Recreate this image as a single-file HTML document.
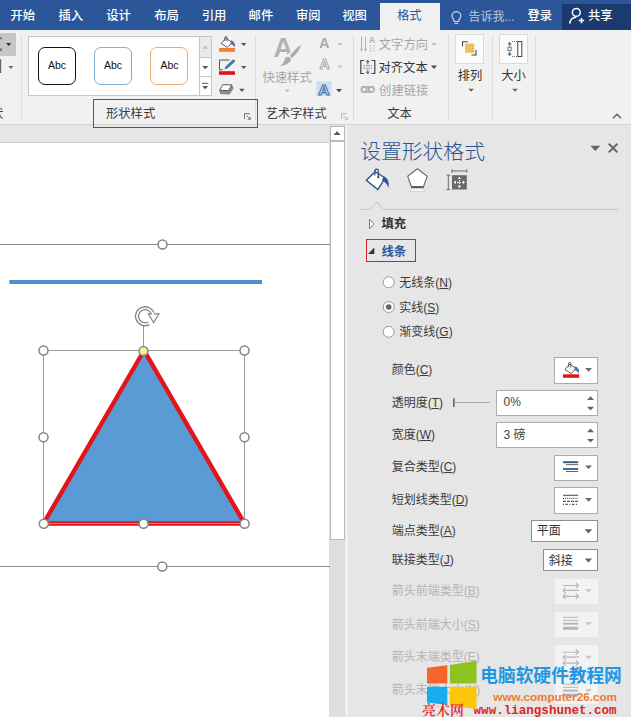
<!DOCTYPE html>
<html lang="zh-CN"><head><meta charset="utf-8"><title>设置形状格式 - 线条</title>
<style>
html,body{margin:0;padding:0}
body{width:631px;height:717px;position:relative;overflow:hidden;background:#e6e6e6;font-family:"Liberation Sans",sans-serif;font-size:12px;color:#444}
.b{position:absolute;box-sizing:border-box}
.ov{position:absolute;left:0;top:0;pointer-events:none;overflow:hidden}
.x{position:absolute;white-space:nowrap;line-height:1;margin-top:.055em;pointer-events:none;font-family:"Liberation Sans","Noto Sans CJK SC",sans-serif}
.a{position:absolute;white-space:nowrap;line-height:1}
</style></head>
<body>
<nav id="tabs">
<div class="b" style="left:0px;top:0px;width:631px;height:30px;background:#2b579a"></div>
<div class="b" style="left:379.8px;top:3px;width:59.9px;height:28px;background:#f1f1f1"></div>
<div class="b" style="left:562px;top:3.5px;width:69px;height:26px;background:#1b3b70"></div>
<svg class="ov" width="631" height="717" viewBox="0 0 631 717">
<g fill="none" stroke="#c9d5ea" stroke-width="1.2"><path d="M454 19.800c-1.400-1.100-2-2.400-2-3.800a4.400 4.400 0 0 1 8.800 0c0 1.400-.6 2.700-2 3.800v1.700h-4.800z"/><path d="M454.500 23.500h3.800"/></g>
<g fill="none" stroke="#fff" stroke-width="1.5"><circle cx="576.300" cy="12.400" r="3.900"/><path d="M569.800 23.600c.3-3.800 2.700-6.200 6.400-6.400"/><path d="M578.800 20.600h5.400M581.500 17.900v5.400"/></g>
</svg>
<span class="x" style="left:10.4px;top:9.5px;font-size:12.3px;color:#fff;font-weight:500">开始</span>
<span class="x" style="left:58.5px;top:9.5px;font-size:12.3px;color:#fff;font-weight:500">插入</span>
<span class="x" style="left:106.3px;top:9.5px;font-size:12.3px;color:#fff;font-weight:500">设计</span>
<span class="x" style="left:154.2px;top:9.5px;font-size:12.3px;color:#fff;font-weight:500">布局</span>
<span class="x" style="left:201.8px;top:9.5px;font-size:12.3px;color:#fff;font-weight:500">引用</span>
<span class="x" style="left:248.6px;top:9.5px;font-size:12.3px;color:#fff;font-weight:500">邮件</span>
<span class="x" style="left:296px;top:9.5px;font-size:12.3px;color:#fff;font-weight:500">审阅</span>
<span class="x" style="left:342.3px;top:9.5px;font-size:12.3px;color:#fff;font-weight:500">视图</span>
<span class="x" style="left:396.9px;top:9.5px;font-size:12.3px;color:#2b579a">格式</span>
<span class="x" style="left:468.5px;top:10.3px;font-size:12px;color:#b9c8e2">告诉我...</span>
<span class="x" style="left:527.5px;top:9.5px;font-size:12.3px;color:#fff;font-weight:500">登录</span>
<span class="x" style="left:588px;top:9.5px;font-size:12.3px;color:#fff;font-weight:500">共享</span>
</nav>
<header id="ribbon">
<div class="b" style="left:0px;top:30px;width:631px;height:94.5px;background:#f1f1f1;border-bottom:1px solid #d2d2d2"></div>
<div class="b" style="left:21.2px;top:35px;width:1px;height:85px;background:#dcdcdc"></div>
<div class="b" style="left:255px;top:35px;width:1px;height:85px;background:#dcdcdc"></div>
<div class="b" style="left:352.5px;top:35px;width:1px;height:85px;background:#dcdcdc"></div>
<div class="b" style="left:447.5px;top:35px;width:1px;height:85px;background:#dcdcdc"></div>
<div class="b" style="left:492px;top:35px;width:1px;height:85px;background:#dcdcdc"></div>
<div class="b" style="left:535px;top:35px;width:1px;height:85px;background:#dcdcdc"></div>
<div class="b" style="left:28px;top:36px;width:184px;height:59.5px;background:#fff;border:1px solid #c6c6c6"></div>
<div class="b" style="left:38px;top:47px;width:38px;height:38px;border:1.5px solid #111;border-radius:7px;background:#fff"></div>
<span class="a" style="left:48px;top:59.9px;font-size:10.5px;color:#111">Abc</span>
<div class="b" style="left:94px;top:47px;width:38px;height:38px;border:1.5px solid #7fb0d6;border-radius:7px;background:#fff"></div>
<span class="a" style="left:104px;top:59.9px;font-size:10.5px;color:#111">Abc</span>
<div class="b" style="left:150.4px;top:47px;width:38px;height:38px;border:1.5px solid #ecab6c;border-radius:7px;background:#fff"></div>
<span class="a" style="left:160.4px;top:59.9px;font-size:10.5px;color:#111">Abc</span>
<div class="b" style="left:198.5px;top:36px;width:13.5px;height:59.5px;border-left:1px solid #c6c6c6;border-right:1px solid #c6c6c6;border-top:1px solid #c6c6c6;border-bottom:1px solid #c6c6c6;background:#fff"></div>
<div class="b" style="left:199.5px;top:37px;width:11.5px;height:20.5px;background:#e9e9e9;border-bottom:1px solid #c6c6c6"></div>
<div class="b" style="left:199.5px;top:57.5px;width:11.5px;height:19px;border-bottom:1px solid #c6c6c6"></div>
<div class="b" style="left:93px;top:99px;width:165px;height:28.5px;border:1.3px solid #cf222b"></div>
<div class="b" style="left:454.5px;top:34px;width:29.5px;height:29.5px;background:#fbfbfb;border:1px solid #dadada"></div>
<div class="b" style="left:498.5px;top:34px;width:29.5px;height:29.5px;background:#fbfbfb;border:1px solid #dadada"></div>
<div class="b" style="left:0px;top:33px;width:16px;height:23px;background:#c6c6c6"></div>
<span class="a" style="left:273.500px;top:34.800px;font-size:27px;font-weight:bold;color:#b2b2b2">A</span>
<span class="a" style="left:319.300px;top:36.200px;font-size:14px;font-weight:bold;color:#a8a8a8">A</span>
<svg class="ov" width="631" height="717" viewBox="0 0 631 717">
<path d="M202.2 48.800l3-3.200 3 3.200z" fill="#c0c0c0"/>
<path d="M202.2 66l3 3.200 3-3.200z" fill="#555"/>
<path d="M202 83.300h6.400" stroke="#555" stroke-width="1" fill="none"/><path d="M202.200 86l3 3.200 3-3.200z" fill="#555"/>
<g fill="none" stroke="#777" stroke-width="1"><path d="M244.500 119v-5.500h5.500"/><path d="M246.400 115.400l3.600 3.600"/></g><path d="M250.800 119.800v-3.400l-3.400 3.400z" fill="#777"/>
<g fill="none" stroke="#bcbcbc" stroke-width="1"><path d="M341.500 119v-5.500h5.500"/><path d="M343.400 115.400l3.600 3.600"/></g><path d="M347.800 119.800v-3.400l-3.400 3.400z" fill="#bcbcbc"/>
<path d="M241 43h5.400l-2.700 3.100z" fill="#555"/>
<path d="M241 66h5.400l-2.700 3.100z" fill="#555"/>
<path d="M239.200 88.800h5.400l-2.700 3.100z" fill="#555"/>
<path d="M284.500 89.500h5.600l-2.800 3z" fill="#c4c4c4"/>
<path d="M431.300 43h5.600l-2.800 3z" fill="#bdbdbd"/>
<path d="M431 65.600h6l-3 3.300z" fill="#444"/>
<path d="M337.300 43h5.600l-2.800 3z" fill="#c4c4c4"/>
<path d="M337.300 65.600h5.600l-2.800 3z" fill="#c4c4c4"/>
<path d="M336 89h6l-3 3.300z" fill="#444"/>
<path d="M468.300 88.800h5.600l-2.800 3z" fill="#666"/>
<path d="M512.300 88.800h5.600l-2.800 3z" fill="#666"/>
<path d="M613 118.300l4-4 4 4" fill="none" stroke="#666" stroke-width="1.600"/>
<path d="M0 37.300h2v2h-2zM0 48.500h2v2.500h-2z" fill="#4f7fb0"/>
<path d="M6 43h5.400l-2.700 3.100z" fill="#333"/><path d="M8.300 65.900h5l-2.500 3.100z" fill="#666"/><path d="M0 59.300h1.200v13.700h-1.200z" fill="#666"/>
<g transform="translate(221.3,36.7) scale(1)"><path d="M0 6.700L4.600 1.500L10.800 5.700L6.100 10.800Z" fill="#fff" stroke="#555" stroke-width="1" stroke-linejoin="round"/><path d="M3.500 4.300V0.900a1.100 1.100 0 0 1 2.200 0V4.700" fill="none" stroke="#555" stroke-width="1"/><path d="M10 3.600c3 1 4.300 3.600 3.600 7.200c-1.200-2-2.600-3-4.600-3.800z" fill="#5a7a9a"/></g>
<path d="M219 48h16v3.800h-16z" fill="#ee8232"/>
<path d="M229.500 60H219.500V69.800H222.800" fill="none" stroke="#555" stroke-width="1"/>
<path d="M224.500 69.200l1-2.800l7-6.400a1.400 1.400 0 0 1 2 2l-7.200 6.400z" fill="#4a7396"/>
<path d="M219 71.200h16v3.600h-16z" fill="#dc1418"/>
<path d="M219.600 90.300L228.600 90.600L231.800 84.900L233.300 86.600V89L229.600 94.600L220.600 94.300L219.600 92.500Z" fill="#8c8c8c"/><path d="M222.800 84.600L231.800 84.900L228.600 90.600L219.600 90.300Z" fill="#fff" stroke="#555" stroke-width="1" stroke-linejoin="round"/>
<path d="M301.500 44.500L289 57.500" stroke="#f1f1f1" stroke-width="6" fill="none"/>
<path d="M301 44.800c-.5 3.500-3.500 8-9 13.200l-2.200-2.200c4.700-5.700 8-9 11.200-11z" fill="#ababab"/><path d="M288.800 56.800l2.300 2.300c-1 3.800-4.800 6.600-11.800 7.200c3.300-1.600 4.400-3.500 5.200-6.600c.6-2.200 2.500-3.300 4.300-2.900z" fill="#ababab"/>
<text x="319.600" y="69.200" font-family="Liberation Sans,sans-serif" font-size="14" font-weight="bold" fill="#fff" stroke="#adadad" stroke-width="1">A</text>
<rect x="316.500" y="81.500" width="15" height="14.500" fill="#cbdcf1"/>
<text x="318.300" y="94.500" font-family="Liberation Sans,sans-serif" font-size="15.500" font-weight="bold" fill="#fff" stroke="#4472a8" stroke-width="1.100">A</text>
<g stroke="#b4b4b4" fill="none" stroke-width="1"><path d="M361.500 36.500V50M365.500 36.500V50"/><path d="M370.500 45V51.500M374 45V51.500" stroke-dasharray="1.500 1"/></g><path d="M359.800 48.800h3.400l-1.700 2.700zM363.800 48.800h3.400l-1.700 2.700z" fill="#b4b4b4"/><text x="369" y="43.300" font-family="Liberation Sans,sans-serif" font-size="8.500" font-weight="bold" fill="#b0b0b0">A</text>
<g fill="none" stroke="#444" stroke-width="1.200"><path d="M364 60.500H360.800V73.500H364M371.500 60.500H374.800V73.500H371.500"/></g><g stroke="#4a7396" stroke-width="1.100" fill="none"><path d="M367.800 60.500V64.500M367.800 69.500V73.500"/><path d="M363.500 65.700H372M363.500 68.300H372" stroke="#777" stroke-dasharray="1.500 1"/></g><path d="M365.600 62.300l2.200-2.600l2.200 2.600zM365.600 71.700l2.200 2.600l2.200-2.600z" fill="#4a7396"/>
<g fill="none" stroke="#b2b2b2" stroke-width="1.900"><rect x="361.400" y="87" width="7.800" height="5" rx="2.500"/><rect x="366.300" y="87" width="7.800" height="5" rx="2.500"/></g>
<rect x="465" y="43.500" width="9.300" height="9.300" fill="#e9c25d"/><path d="M462.500 46.500V41.800H467.800M471.500 55H476V50" fill="none" stroke="#444" stroke-width="1.100"/>
<rect x="517.800" y="41.500" width="4" height="15" fill="#fff" stroke="#444" stroke-width="1"/><rect x="508" y="47.300" width="3.200" height="3.200" fill="#fff" stroke="#777" stroke-width="1"/><path d="M507.300 44.500l2.300-2.800l2.300 2.800zM507.300 53.500l2.300 2.800l2.300-2.800z" fill="#3a78b5"/><path d="M509.600 44V46.500M509.600 51.500V54" stroke="#3a78b5" stroke-width="1.200" fill="none"/><path d="M512 41.500H517M512 56.500H517" stroke="#777" stroke-width="1" stroke-dasharray="1 1" fill="none"/>
</svg>
<span class="x" style="left:106px;top:107.2px;font-size:12.3px;color:#3c3c3c">形状样式</span>
<span class="x" style="left:266px;top:107.4px;font-size:12.1px;color:#3c3c3c">艺术字样式</span>
<span class="x" style="left:387.3px;top:107.5px;font-size:12.3px;color:#3c3c3c">文本</span>
<span class="x" style="left:-9.1px;top:107.2px;font-size:12.3px;color:#3c3c3c">状</span>
<span class="x" style="left:262.5px;top:71.1px;font-size:12.3px;color:#a6a6a6">快速样式</span>
<span class="x" style="left:378.8px;top:38.5px;font-size:12.3px;color:#a6a6a6">文字方向</span>
<span class="x" style="left:378.5px;top:61px;font-size:12.3px;color:#333">对齐文本</span>
<span class="x" style="left:379.1px;top:84.1px;font-size:12.3px;color:#a6a6a6">创建链接</span>
<span class="x" style="left:457.8px;top:68.9px;font-size:12.3px;color:#333">排列</span>
<span class="x" style="left:501.3px;top:68.9px;font-size:12.3px;color:#333">大小</span>
</header>
<main id="doc">
<div class="b" style="left:0px;top:142px;width:330px;height:575px;background:#fff;border-top:1px solid #c9c9c9"></div>
<div class="b" style="left:329px;top:125px;width:16px;height:592px;background:#dedede"></div>
<div class="b" style="left:330px;top:126px;width:14.7px;height:14.7px;background:#fff;border:1px solid #bababa"></div>
<div class="b" style="left:330px;top:141.2px;width:14.7px;height:399.3px;background:#fff;border:1px solid #bababa"></div>
<div class="b" style="left:345px;top:125px;width:2.5px;height:592px;background:#efefef"></div>
<svg class="ov" width="631" height="717" viewBox="0 0 631 717">
<path d="M333.500 135l3.600-3.800 3.600 3.800z" fill="#555"/>
<path d="M0 244.500H330M0 566.500H330" stroke="#8c8c8c" stroke-width="1" fill="none"/>
<path d="M9.300 282H262" stroke="#4f90cd" stroke-width="4" fill="none"/>
<path d="M144 350.500L43.500 523.500H244.500Z" fill="#5b9bd5" stroke="#e3141c" stroke-width="4.400" stroke-linejoin="miter"/>
<path d="M43.500 350.500H244.500V523.500H43.500Z M143.500 326V346" fill="none" stroke="#9a9a9a" stroke-width="1"/>
<circle cx="162.500" cy="244.500" r="4.500" fill="#fff" stroke="#858585" stroke-width="1.500"/>
<circle cx="162.300" cy="566.500" r="4.500" fill="#fff" stroke="#858585" stroke-width="1.500"/>
<circle cx="43.500" cy="350.500" r="4.500" fill="#fff" stroke="#858585" stroke-width="1.500"/>
<circle cx="244.500" cy="350.500" r="4.500" fill="#fff" stroke="#858585" stroke-width="1.500"/>
<circle cx="43.500" cy="437.300" r="4.500" fill="#fff" stroke="#858585" stroke-width="1.500"/>
<circle cx="244.500" cy="437.300" r="4.500" fill="#fff" stroke="#858585" stroke-width="1.500"/>
<circle cx="43.800" cy="523.700" r="4.500" fill="#fff" stroke="#858585" stroke-width="1.500"/>
<circle cx="143.600" cy="523.700" r="4.500" fill="#fff" stroke="#858585" stroke-width="1.500"/>
<circle cx="244.600" cy="523.700" r="4.500" fill="#fff" stroke="#858585" stroke-width="1.500"/>
<circle cx="143.500" cy="351" r="4.500" fill="#ffe9a0" stroke="#858585" stroke-width="1.500"/>
<g fill="none" stroke-linecap="butt"><path d="M148.800 323.300A8 8 0 1 1 153 315.500" stroke="#888" stroke-width="4.200"/><path d="M148.800 323.300A8 8 0 1 1 153 315.500" stroke="#fff" stroke-width="1.600"/><path d="M148.300 313.800H159L153.600 322.600Z" fill="#fff" stroke="#888" stroke-width="1.200" stroke-linejoin="miter"/><path d="M152 312.500v2.200h2.100v-2.200z" fill="#fff" stroke="none"/></g>
</svg>
</main>
<aside id="pane">
<div class="b" style="left:347.5px;top:125px;width:283.5px;height:592px;background:#e6e6e6"></div>
<div class="b" style="left:366px;top:238.500px;width:49.5px;height:23px;border:1.3px solid #cf222b"></div>
<div class="b" style="left:554.2px;top:357.2px;width:43.6px;height:26.4px;background:#fff;border:1px solid #ababab"></div>
<div class="b" style="left:554.2px;top:454.6px;width:43.6px;height:26.4px;background:#fff;border:1px solid #ababab"></div>
<div class="b" style="left:554.2px;top:487.2px;width:43.6px;height:26.4px;background:#fff;border:1px solid #ababab"></div>
<div class="b" style="left:554.5px;top:578.6px;width:43px;height:25.5px;background:#f3f3f3"></div>
<div class="b" style="left:554.5px;top:611.6px;width:43px;height:25.5px;background:#f3f3f3"></div>
<div class="b" style="left:554.5px;top:645.3px;width:43px;height:25.5px;background:#f3f3f3"></div>
<div class="b" style="left:554.5px;top:678.5px;width:43px;height:25.5px;background:#f3f3f3"></div>
<div class="b" style="left:495.8px;top:390.2px;width:102px;height:25.4px;background:#fff;border:1px solid #ababab"></div>
<div class="b" style="left:495.8px;top:422.4px;width:102px;height:25.4px;background:#fff;border:1px solid #ababab"></div>
<span class="a" style="left:503.500px;top:396.300px;font-size:12px;color:#444">0%</span>
<span class="a" style="left:503.500px;top:428.500px;font-size:12px;color:#444">3</span>
<div class="b" style="left:531.3px;top:520.3px;width:66.5px;height:22px;background:#fff;border:1px solid #8f8f8f"></div>
<div class="b" style="left:543.3px;top:549.4px;width:54.5px;height:22px;background:#fff;border:1px solid #8f8f8f"></div>
<svg class="ov" width="631" height="717" viewBox="0 0 631 717">
<path d="M590.300 145.700h10l-5 5.400z" fill="#666"/>
<path d="M608.800 143.800l8.600 8.600M617.400 143.800l-8.600 8.600" stroke="#666" stroke-width="2" fill="none"/>
<path d="M360.500 209.500H370.300L377 202L383.700 209.500H618" fill="none" stroke="#c6c6c6" stroke-width="1"/>
<path d="M369.500 219.300v9.400l4.600-4.700z" fill="#fff" stroke="#777" stroke-width="1"/>
<path d="M374.300 247.500v6.500h-6.300z" fill="#333"/>
<circle cx="388.700" cy="282.300" r="5.500" fill="#fff" stroke="#989898" stroke-width="1"/>
<circle cx="388.700" cy="307" r="5.500" fill="#fff" stroke="#989898" stroke-width="1"/>
<circle cx="388.700" cy="307" r="2.800" fill="#666"/>
<circle cx="388.700" cy="331.800" r="5.500" fill="#fff" stroke="#989898" stroke-width="1"/>
<path d="M384.500 349.500H618" stroke="#e0e0e0" stroke-width="1" fill="none"/>
<path d="M453.800 398.300v8.800" stroke="#666" stroke-width="1.600" fill="none"/><path d="M455 402.500H490" stroke="#a8a8a8" stroke-width="1" fill="none"/>
<path d="M585.200 368h6.800l-3.400 3.700z" fill="#666"/>
<path d="M585.200 465.400h6.800l-3.400 3.700z" fill="#666"/>
<path d="M585.200 498h6.800l-3.400 3.700z" fill="#666"/>
<path d="M585.200 589.100h6.600l-3.300 3.600z" fill="#c8c8c8"/>
<path d="M585.200 622.100h6.600l-3.300 3.600z" fill="#c8c8c8"/>
<path d="M585.200 655.800h6.600l-3.300 3.600z" fill="#c8c8c8"/>
<path d="M585.200 689h6.600l-3.300 3.600z" fill="#c8c8c8"/>
<path d="M587 400h7l-3.500-3.700z M587 406.700h7l-3.500 3.700z" fill="#666"/>
<path d="M587 432.200h7l-3.500-3.700z M587 438.900h7l-3.500 3.700z" fill="#666"/>
<path d="M584.600 529.200h7.600l-3.800 4.200z M584.600 558.400h7.600l-3.800 4.200z" fill="#666"/>
<g transform="translate(366.300,171)"><path d="M0 9.200L8.800 0.800L19 7L11.400 18.600Z" fill="#fff" stroke="#2b4a7a" stroke-width="1.300" stroke-linejoin="round"/><path d="M8.600 4.600V-0.200a1.700 1.700 0 0 1 3.400 0V6" fill="none" stroke="#2b4a7a" stroke-width="1.200"/><circle cx="12" cy="6.200" r="1.100" fill="#2b4a7a"/><path d="M17.600 5.600c4 1.700 5.600 5.500 4.600 11.600c-.9-3.800-3-6.300-6.800-8z" fill="#2b579a"/></g>
<path d="M417.400 168.800L427.200 176.200L423.500 186.800H411.400L407.700 176.200Z" fill="#fff" stroke="#6a6a6a" stroke-width="1.100" stroke-linejoin="round"/><path d="M411.400 187.300H423.500" stroke="#444" stroke-width="1.600" fill="none"/><path d="M411.600 188.300H423.300L424.800 191.600H410.100Z" fill="#f4f4f4" stroke="#bdbdbd" stroke-width=".6"/>
<rect x="452" y="175.200" width="14.800" height="14.300" fill="#6a6a6a"/><path d="M452 171H466.800M452 169.200V172.800M466.800 169.200V172.800M448.300 175.200V189.500M446.500 175.200H450.100M446.500 189.500H450.100" stroke="#6a6a6a" stroke-width="1" fill="none"/><path d="M459.400 177.500V187.200M454.500 182.350H464.300" stroke="#fff" stroke-width="1" stroke-dasharray="1.500 1" fill="none"/><path d="M457.600 178.800l1.800-2l1.800 2zM457.600 185.900l1.800 2l1.800-2zM455.800 180.550l-2 1.800l2 1.800zM463 180.550l2 1.800l-2 1.800z" fill="#fff"/>
<g transform="translate(565,362.600) scale(1.02)"><path d="M0 6.700L4.600 1.500L10.800 5.700L6.100 10.800Z" fill="#fff" stroke="#555" stroke-width="0.980392" stroke-linejoin="round"/><path d="M3.500 4.300V0.900a1.100 1.100 0 0 1 2.200 0V4.700" fill="none" stroke="#555" stroke-width="0.980392"/><path d="M10 3.600c3 1 4.300 3.600 3.600 7.200c-1.200-2-2.600-3-4.600-3.800z" fill="#4a7aa5"/></g>
<path d="M563 374.300h16.200v3.500h-16.200z" fill="#ea1018"/>
<path d="M563 462.200H578.200" stroke="#3f5f7f" stroke-width="2" fill="none"/><path d="M566 464.600H578.200M566 471.500H578.200" stroke="#666" stroke-width="1" fill="none"/><path d="M563 469H578.200" stroke="#3a6ea5" stroke-width="2" fill="none"/>
<g stroke="#555" fill="none" stroke-width="1.100"><path d="M563 495.300H578.200"/><path d="M563 498.400H578.200" stroke-dasharray="1 1.100"/><path d="M563 501.400H578.200" stroke-dasharray="3 1"/><path d="M563 504.400H578.200" stroke-dasharray="1 1.500 2.500 1.500"/></g>
<g stroke="#b6b6b6" stroke-width="1.100" fill="none"><path d="M562.800 585.500H578.600M575.800 582.800l2.800 2.700l-2.800 2.700"/><path d="M563 590.400H578.800M565.800 587.700l-2.800 2.700l2.800 2.700"/><path d="M563 596.400H578.600M575.800 593.700l2.800 2.700l-2.800 2.700M565.800 593.700l-2.800 2.700l2.800 2.700"/></g>
<g stroke="#b6b6b6" stroke-width="1.100" fill="none"><path d="M562.800 652.200H578.600M575.800 649.500l2.800 2.700l-2.800 2.700"/><path d="M563 657.100H578.800M565.800 654.400l-2.800 2.700l2.800 2.700"/><path d="M563 663.100H578.600M575.800 660.400l2.800 2.700l-2.800 2.700M565.800 660.400l-2.800 2.700l2.800 2.700"/></g>
<g stroke="#b6b6b6" fill="none"><path d="M563 617.300H578.200M563 620.400H578.200" stroke-width="1"/><path d="M563 623.700H578.200" stroke-width="2"/><path d="M563 628.300H578.200" stroke-width="3"/></g>
<g stroke="#b6b6b6" fill="none"><path d="M563 684.200H578.200M563 687.300H578.200" stroke-width="1"/><path d="M563 690.600H578.200" stroke-width="2"/><path d="M563 695.200H578.200" stroke-width="3"/></g>
</svg>
<span class="x" style="left:360.2px;top:141.2px;font-size:20.8px;color:#2a5492;font-weight:300">设置形状格式</span>
<span class="x" style="left:381.5px;top:217.7px;font-size:12.3px;color:#333;font-weight:bold">填充</span>
<span class="x" style="left:381.5px;top:245px;font-size:12.3px;color:#2b579a;font-weight:bold">线条</span>
<span class="x" style="left:399.3px;top:276.1px;font-size:12px;color:#3c3c3c">无线条(<u>N</u>)</span>
<span class="x" style="left:399.3px;top:300.9px;font-size:12px;color:#3c3c3c">实线(<u>S</u>)</span>
<span class="x" style="left:399.3px;top:325.8px;font-size:12px;color:#3c3c3c">渐变线(<u>G</u>)</span>
<span class="x" style="left:391.7px;top:363.6px;font-size:12px;color:#3c3c3c">颜色(<u>C</u>)</span>
<span class="x" style="left:391.7px;top:395.9px;font-size:12px;color:#3c3c3c">透明度(<u>T</u>)</span>
<span class="x" style="left:391.7px;top:428.6px;font-size:12px;color:#3c3c3c">宽度(<u>W</u>)</span>
<span class="x" style="left:391.7px;top:460.6px;font-size:12px;color:#3c3c3c">复合类型(<u>C</u>)</span>
<span class="x" style="left:391.7px;top:493.5px;font-size:12px;color:#3c3c3c">短划线类型(<u>D</u>)</span>
<span class="x" style="left:391.7px;top:524.6px;font-size:12px;color:#3c3c3c">端点类型(<u>A</u>)</span>
<span class="x" style="left:391.7px;top:553.7px;font-size:12px;color:#3c3c3c">联接类型(<u>J</u>)</span>
<span class="x" style="left:391.7px;top:584.4px;font-size:12px;color:#b4b4b4">箭头前端类型(<u>B</u>)</span>
<span class="x" style="left:391.7px;top:618.1px;font-size:12px;color:#b4b4b4">箭头前端大小(<u>S</u>)</span>
<span class="x" style="left:391.7px;top:650.4px;font-size:12px;color:#b4b4b4">箭头末端类型(<u>E</u>)</span>
<span class="x" style="left:391.7px;top:683.2px;font-size:12px;color:#b4b4b4">箭头末端大小(<u>N</u>)</span>
<span class="x" style="left:513.5px;top:428.8px;font-size:12px;color:#3c3c3c">磅</span>
<span class="x" style="left:536.8px;top:524.5px;font-size:12px;color:#333">平面</span>
<span class="x" style="left:548.7px;top:554.1px;font-size:12px;color:#333">斜接</span>
</aside>
<footer id="wm">
<span class="a" style="left:493.300px;top:690.900px;font-size:11.700px;font-weight:bold;color:#ee7b30">www.computer26.com</span>
<span class="a" style="left:473.600px;top:704.500px;font-size:12.550px;font-weight:bold;font-family:'Liberation Mono',monospace;color:#dc2626">www.liangshunet.com</span>
<svg class="ov" width="631" height="717" viewBox="0 0 631 717">
<path d="M427 667.700L447.300 665.200V683.600H427Z" fill="#f3652d"/><path d="M449.900 665L476.500 660.800V683.600H449.900Z" fill="#8dc21f"/><path d="M427 686.800H447.300V705.100L427 702.600Z" fill="#16acee"/><path d="M449.900 686.800H476.500V708.900L449.900 705.500Z" fill="#fdc60a"/>
</svg>
<span class="x" style="left:480.3px;top:667.5px;font-size:17.7px;color:#1d97e3;font-weight:bold">电脑软硬件教程网</span>
<span class="x" style="left:422.1px;top:702.9px;font-size:13.9px;color:#e02a2a;font-weight:600;font-family:'Liberation Serif','Noto Serif CJK SC',serif">亮术网</span>
</footer>
</body></html>
